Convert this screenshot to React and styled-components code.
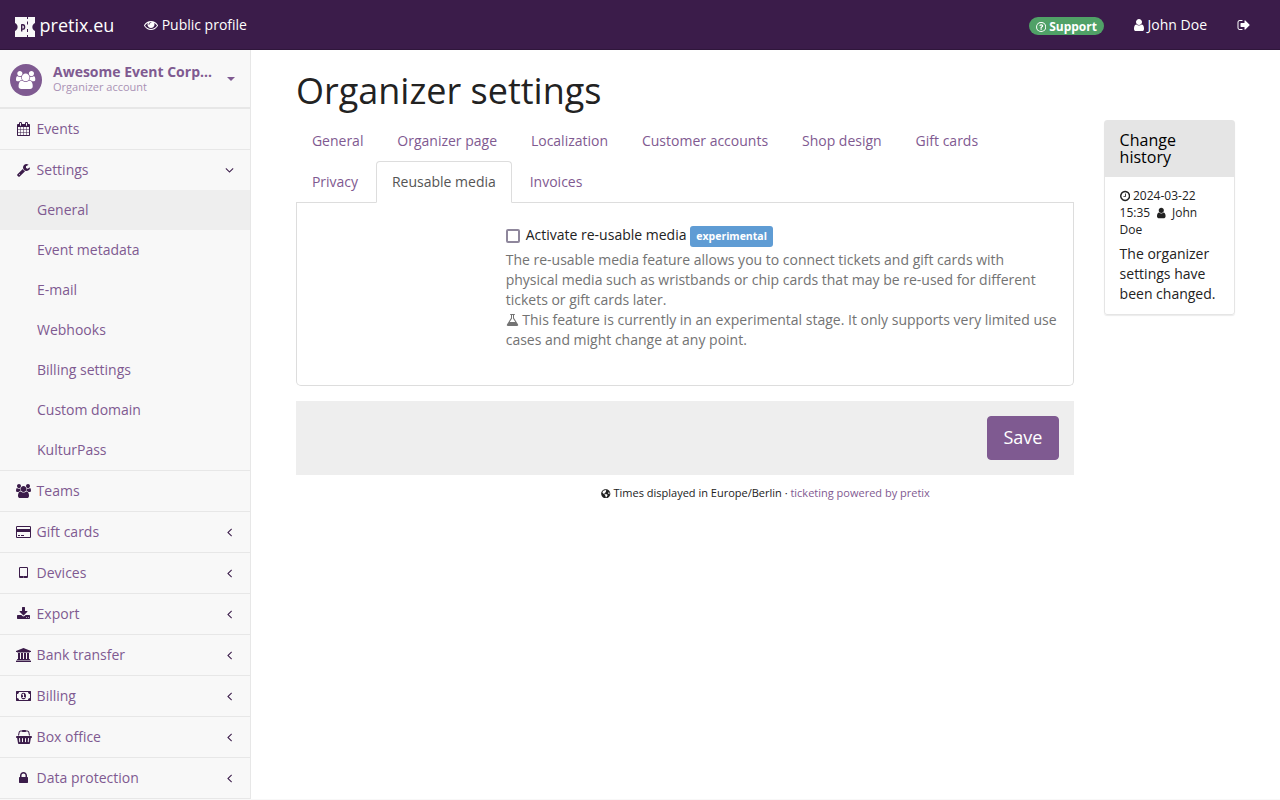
import React from 'react';
import styled, { createGlobalStyle, css } from 'styled-components';
import { FaGlobeAmericas } from 'react-icons/fa';

const Global = createGlobalStyle`
  *, *::before, *::after { box-sizing: border-box; }
  html, body { margin: 0; }
  body {
    height: 800px;
    overflow: hidden;
    background: #f8f8f8;
    color: #222;
    font: 14px/20px "Open Sans", "Noto Sans", sans-serif;
  }
  a { color: #7f5a91; text-decoration: none; }
`;

const paths = {
  eye: [1792, 'M1664 960q-152-236-381-353 61 104 61 225 0 185-131.500 316.500t-316.500 131.500-316.500-131.500-131.500-316.500q0-121 61-225-229 117-381 353 133 205 333.500 326.500t434.500 121.500 434.500-121.500 333.500-326.500zm-720-384q0-20-14-34t-34-14q-125 0-214.500 89.500t-89.500 214.500q0 20 14 34t34 14 34-14 14-34q0-86 61-147t147-61q20 0 34-14t14-34zm848 384q0 34-20 69-140 230-376.500 368.500t-499.500 138.500-499.500-139-376.500-368q-20-35-20-69t20-69q140-229 376.500-368t499.500-139 499.500 139 376.500 368q20 35 20 69z'],
  user: [1280, 'M1536 1399q0 109-62.500 187t-150.500 78h-854q-88 0-150.500-78t-62.500-187q0-85 8.500-160.500t31.500-152 58.500-131 94-89 134.500-34.500q131 128 313 128t313-128q76 0 134.500 34.500t94 89 58.500 131 31.500 152 8.500 160.500zm-256-887q0 159-112.500 271.500t-271.500 112.500-271.500-112.500-112.500-271.500 112.500-271.500 271.500-112.500 271.500 112.500 112.500 271.500z', 256],
  signOut: [1664, 'M704 1440q0 4 1 20t.5 26.500-3 23.500-10 19.500-20.500 6.500h-320q-119 0-203.500-84.500t-84.500-203.500v-704q0-119 84.500-203.500t203.500-84.500h320q13 0 22.500 9.500t9.500 22.500q0 4 1 20t.5 26.500-3 23.500-10 19.500-20.500 6.500h-320q-66 0-113 47t-47 113v704q0 66 47 113t113 47h312l11.500 1 11.500 3 8 5.500 7 9 2 13.500zm928-544q0 26-19 45l-544 544q-19 19-45 19t-45-19-19-45v-288h-448q-26 0-45-19t-19-45v-384q0-26 19-45t45-19h448v-288q0-26 19-45t45-19 45 19l544 544q19 19 19 45z'],
  calendar: [1664, 'M192 1664h288v-288h-288v288zm352 0h320v-288h-320v288zm-352-352h288v-320h-288v320zm352 0h320v-320h-320v320zm-352-384h288v-288h-288v288zm736 736h320v-288h-320v288zm-384-736h320v-288h-320v288zm768 736h288v-288h-288v288zm-384-352h320v-320h-320v320zm-352-864v-288q0-13-9.500-22.500t-22.500-9.500h-64q-13 0-22.500 9.500t-9.500 22.500v288q0 13 9.500 22.500t22.500 9.500h64q13 0 22.500-9.500t9.500-22.500zm736 864h288v-320h-288v320zm-384-384h320v-288h-320v288zm384 0h288v-288h-288v288zm32-480v-288q0-13-9.500-22.500t-22.500-9.500h-64q-13 0-22.500 9.500t-9.500 22.500v288q0 13 9.500 22.500t22.500 9.500h64q13 0 22.500-9.500t9.500-22.500zm384-64v1280q0 52-38 90t-90 38h-1408q-52 0-90-38t-38-90v-1280q0-52 38-90t90-38h128v-96q0-66 47-113t113-47h64q66 0 113 47t47 113v96h384v-96q0-66 47-113t113-47h64q66 0 113 47t47 113v96h128q52 0 90 38t38 90z', 64],
  wrench: [1664, 'M448 1472q0-26-19-45t-45-19-45 19-19 45 19 45 45 19 45-19 19-45zm644-420l-682 682q-37 37-90 37-52 0-91-37l-106-108q-38-36-38-90 0-53 38-91l681-681q39 98 114.500 173.500t173.500 114.500zm634-435q0 39-23 106-47 134-164.500 217.500t-258.500 83.500q-185 0-316.500-131.500t-131.500-316.500 131.500-316.500 316.500-131.500q58 0 121.500 16.500t107.500 46.500q16 11 16 28t-16 28l-293 169v224l193 107q5-3 79-48.500t135.500-81 70.500-35.500q15 0 23.500 10t8.500 25z', 64],
  group: [1920, 'M593 896q-162 5-265 128h-134q-82 0-138-40.500t-56-118.500q0-353 124-353 6 0 43.500 21t97.500 42.500 119 21.500q67 0 133-23-5 37-5 66 0 139 81 256zm1071 637q0 120-73 189.500t-194 69.500h-874q-121 0-194-69.500t-73-189.500q0-53 3.500-103.500t14-109 26.500-108.500 43-97.500 62-81 85.500-53.500 111.500-20q10 0 43 21.500t73 48 107 48 135 21.500 135-21.500 107-48 73-48 43-21.500q61 0 111.500 20t85.500 53.500 62 81 43 97.500 26.500 108.500 14 109 3.500 103.500zm-1024-1277q0 106-75 181t-181 75-181-75-75-181 75-181 181-75 181 75 75 181zm704 384q0 159-112.500 271.500t-271.500 112.500-271.500-112.500-112.500-271.500 112.500-271.500 271.500-112.500 271.500 112.500 112.500 271.500zm576 225q0 78-56 118.500t-138 40.500h-134q-103-123-265-128 81-117 81-256 0-29-5-66 66 23 133 23 59 0 119-21.500t97.500-42.500 43.500-21q124 0 124 353zm-128-609q0 106-75 181t-181 75-181-75-75-181 75-181 181-75 181 75 75 181z'],
  card: [1920, 'M1760 128q66 0 113 47t47 113v1216q0 66-47 113t-113 47h-1600q-66 0-113-47t-47-113v-1216q0-66 47-113t113-47h1600zm-1600 128q-13 0-22.500 9.500t-9.500 22.500v224h1664v-224q0-13-9.500-22.500t-22.500-9.500h-1600zm1600 1280q13 0 22.500-9.500t9.500-22.500v-608h-1664v608q0 13 9.500 22.500t22.500 9.500h1600zm-1504-128v-128h256v128h-256zm384 0v-128h384v128h-384z'],
  tablet: [1152, 'M960 1408q0-26-19-45t-45-19-45 19-19 45 19 45 45 19 45-19 19-45zm384-160v-960q0-13-9.500-22.500t-22.500-9.500h-832q-13 0-22.500 9.500t-9.500 22.500v960q0 13 9.500 22.500t22.500 9.500h832q13 0 22.500-9.500t9.500-22.500zm128-960v1088q0 66-47 113t-113 47h-832q-66 0-113-47t-47-113v-1088q0-66 47-113t113-47h832q66 0 113 47t47 113z', 320],
  download: [1664, 'M1344 1344q0-26-19-45t-45-19-45 19-19 45 19 45 45 19 45-19 19-45zm256 0q0-26-19-45t-45-19-45 19-19 45 19 45 45 19 45-19 19-45zm128-224v320q0 40-28 68t-68 28h-1472q-40 0-68-28t-28-68v-320q0-40 28-68t68-28h465l135 136q58 56 136 56t136-56l136-136h464q40 0 68 28t28 68zm-325-569q17 41-14 70l-448 448q-18 19-45 19t-45-19l-448-448q-31-29-14-70 17-39 59-39h256v-448q0-26 19-45t45-19h256q26 0 45 19t19 45v448h256q42 0 59 39z', 64],
  bank: [1920, 'M960 0l960 384v128h-128q0 26-20.500 45t-48.500 19h-1526q-28 0-48.500-19t-20.500-45h-128v-128zm-704 640h256v768h128v-768h256v768h128v-768h256v768h128v-768h256v768h59q28 0 48.500 19t20.500 45v64h-1664v-64q0-26 20.500-45t48.500-19h59v-768zm1595 960q28 0 48.500 19t20.500 45v128h-1920v-128q0-26 20.500-45t48.500-19h1782z'],
  money: [1920, 'M768 1152h384v-96h-128v-448h-114l-148 137 77 80q42-37 55-57h2v288h-128v96zm512-256q0 70-21 142t-59.500 134-101.500 101-138 39-138-39-101.500-101-59.500-134-21-142 21-142 59.500-134 101.500-101 138-39 138 39 101.500 101 59.500 134 21 142zm512 256v-512q-106 0-181-75t-75-181h-1152q0 106-75 181t-181 75v512q106 0 181 75t75 181h1152q0-106 75-181t181-75zm128-832v1152q0 26-19 45t-45 19h-1792q-26 0-45-19t-19-45v-1152q0-26 19-45t45-19h1792q26 0 45 19t19 45z'],
  basket: [2048, 'M1920 768q53 0 90.500 37.500t37.500 90.500-37.500 90.500-90.500 37.500h-15l-115 662q-8 46-44 76t-82 30h-1280q-46 0-82-30t-44-76l-115-662h-15q-53 0-90.500-37.500t-37.500-90.500 37.500-90.500 90.500-37.500h1792zm-1435 800q26-2 43.500-22.500t15.500-46.500l-32-416q-2-26-22.500-43.500t-46.500-15.500-43.500 22.500-15.500 46.500l32 416q2 25 20.500 42t43.500 17h5zm411-64v-416q0-26-19-45t-45-19-45 19-19 45v416q0 26 19 45t45 19 45-19 19-45zm384 0v-416q0-26-19-45t-45-19-45 19-19 45v416q0 26 19 45t45 19 45-19 19-45zm352 5l32-416q2-26-15.500-46.500t-43.500-22.500-46.500 15.500-22.500 43.500l-32 416q-2 26 15.500 46.500t43.500 22.500h5q25 0 43.500-17t20.500-42zm-1156-1217l-93 412h-132l101-441q19-88 89-143.500t160-55.500h167q0-26 19-45t45-19h384q26 0 45 19t19 45h167q90 0 160 55.500t89 143.500l101 441h-132l-93-412q-11-44-45.500-72t-79.500-28h-167q0 26-19 45t-45 19h-384q-26 0-45-19t-19-45h-167q-45 0-79.500 28t-45.500 72z'],
  lock: [1152, 'M640 768h512v-192q0-106-75-181t-181-75-181 75-75 181v192zm832 96v576q0 40-28 68t-68 28h-960q-40 0-68-28t-28-68v-576q0-40 28-68t68-28h32v-192q0-184 132-316t316-132 316 132 132 316v192h32q40 0 68 28t28 68z', 320],
  left: [640, 'M1203 544q0 13-10 23l-393 393 393 393q10 10 10 23t-10 23l-50 50q-10 10-23 10t-23-10l-466-466q-10-10-10-23t10-23l466-466q10-10 23-10t23 10l50 50q10 10 10 23z', 576],
  down: [1152, 'M1395 736q0 13-10 23l-466 466q-10 10-23 10t-23-10l-466-466q-10-10-10-23t10-23l50-50q10-10 23-10t23 10l393 393 393-393q10-10 23-10t23 10l50 50q10 10 10 23z', 320],
  clock: [1536, 'M1024 544v448q0 14-9 23t-23 9h-320q-14 0-23-9t-9-23v-64q0-14 9-23t23-9h224v-352q0-14 9-23t23-9h64q14 0 23 9t9 23zm416 352q0-148-73-273t-198-198-273-73-273 73-198 198-73 273 73 273 198 198 273 73 273-73 198-198 73-273zm224 0q0 209-103 385.500t-279.500 279.500-385.500 103-385.500-103-279.500-279.500-103-385.500 103-385.500 279.500-279.500 385.500-103 385.500 103 279.500 279.500 103 385.500z', 128],
  flask: [1664, 'M1591 1448q56 89 21.500 152.500t-140.500 63.500h-1152q-106 0-140.500-63.500t21.500-152.500l503-793v-399h-64q-26 0-45-19t-19-45 19-45 45-19h512q26 0 45 19t19 45-19 45-45 19h-64v399zm-779-725l-272 429h712l-272-429-20-31v-436h-128v436z', 64],
};

const Glyph = styled.svg`
  height: 1em;
  width: ${(p) => p.$w}em;
  fill: currentColor;
  vertical-align: -0.143em;
  flex: none;
`;

function Icon({ name, ...rest }) {
  const [w, d, x = 0] = paths[name];
  return (
    <Glyph $w={w / 1792} viewBox={`${x} 0 ${w} 1792`} {...rest}>
      <path d={d} />
    </Glyph>
  );
}

function HelpIcon() {
  return (
    <Glyph $w={1536 / 1792} viewBox="128 0 1536 1792">
      <circle cx="896" cy="896" r="688" fill="none" stroke="currentColor" strokeWidth="150" />
      <g transform="translate(188 180) scale(.79)">
        <path d="M1024 1376v-192q0-14-9-23t-23-9h-192q-14 0-23 9t-9 23v192q0 14 9 23t23 9h192q14 0 23-9t9-23zm256-672q0-88-55.500-163t-138.500-116-170-41q-243 0-371 213-15 24 8 42l132 100q7 6 19 6 16 0 25-12 53-68 86-92 34-24 86-24 48 0 85.500 26t37.500 59q0 38-20 61t-68 45q-63 28-115.500 86.500t-52.500 125.500v36q0 14 9 23t23 9h192q14 0 23-9t9-23q0-19 21.500-49.500t54.500-49.500q32-18 49-28.500t46-35 44.500-48 28-60.500 12.500-81z" />
      </g>
    </Glyph>
  );
}

const TopBar = styled.header`
  height: 50px;
  display: flex;
  align-items: flex-start;
  padding: 15px 30px 0 15px;
  background: #3b1c4a;
  border-bottom: 1px solid #2f163b;
  color: #fff;
`;
const Brand = styled.a`
  display: flex;
  gap: 4.6px;
  width: 129px;
  color: #fff;
  font-size: 18px;
`;
const Logo = styled.svg`
  width: 20px;
  height: 20px;
  margin-top: 2px;
`;
const TopLink = styled.a`
  color: #fff;
  margin-left: ${(p) => p.$gap || 0}px;
`;
const Spacer = styled.div`
  flex: 1;
`;
const SupportPill = styled.a`
  display: flex;
  align-items: center;
  gap: 3px;
  height: 18px;
  margin-top: 2px;
  padding: 1px 7px 0;
  border-radius: 9px;
  background: #50a167;
  color: #fff;
  font-size: 12px;
  font-weight: 700;
`;

const Layout = styled.div`
  display: flex;
  height: 749px;
`;
const Sidebar = styled.nav`
  width: 251px;
  flex: none;
  background: #f8f8f8;
  border-right: 1px solid #e7e7e7;
`;
const Account = styled.div`
  display: flex;
  align-items: center;
  height: 59px;
  padding: 1px 15px 0 10px;
  border-bottom: 2px solid #e7e7e7;
  color: #7f5a91;
`;
const Avatar = styled.div`
  display: flex;
  align-items: center;
  justify-content: center;
  width: 32px;
  height: 32px;
  margin-top: 2px;
  border-radius: 50%;
  background: #7f5a91;
  color: #fff;
  font-size: 18px;
`;
const AccountText = styled.div`
  width: 163px;
  margin: 0 11px;
  line-height: 15px;
`;
const AccountName = styled.div`
  font-weight: 700;
  white-space: nowrap;
`;
const AccountKind = styled.div`
  font-size: 11px;
  opacity: 0.65;
`;
const Caret = styled.span`
  border: 4px solid transparent;
  border-top-color: #7f5a91;
  border-bottom: 0;
`;
const NavItem = styled.a`
  display: flex;
  align-items: center;
  height: ${(p) => (p.$open ? 40 : 41)}px;
  padding: 0 16px 0 14.6px;
  border-bottom: ${(p) => (p.$open ? 0 : 1)}px solid #e7e7e7;
`;
const NavIcon = styled.span`
  width: 18px;
  margin-right: 4px;
  display: flex;
  justify-content: center;
  color: #3b1c4a;
`;
const NavArrow = styled.span`
  display: flex;
  justify-content: center;
  width: 9px;
  margin-left: auto;
  color: #3b1c4a;
`;
const SubNav = styled.div`
  border-bottom: 1px solid #e7e7e7;
`;
const SubItem = styled.a`
  display: block;
  height: 40px;
  padding: 10px 15px 10px 37px;
  ${(p) => p.$active && css`background: #eee;`}
`;

const Main = styled.main`
  flex: 1;
  padding: 20px 45px 0;
  background: #fff;
`;
const Title = styled.h1`
  margin: 0 0 9px;
  font-size: 36px;
  line-height: 41px;
  font-weight: 400;
`;
const Columns = styled.div`
  display: grid;
  grid-template-columns: 778px 131px;
  gap: 30px;
  align-items: start;
`;
const Tabs = styled.div`
  display: flex;
  flex-wrap: wrap;
  padding-right: 60px;
  border-bottom: 1px solid #ddd;
`;
const Tab = styled.a`
  height: 42px;
  margin: 0 2px -1px 0;
  padding: 10px 15px 10px 14.9px;
  border: 1px solid transparent;
  border-radius: 4px 4px 0 0;
  ${(p) => p.$active && css`
    color: #555;
    background: #fff;
    border-color: #ddd #ddd #fff;
  `}
`;
const TabPanel = styled.section`
  height: 183px;
  padding: 21px 15px 0 208.7px;
  border: 1px solid #ddd;
  border-top: 0;
  border-radius: 0 0 5px 5px;
`;
const CheckRow = styled.label`
  display: flex;
  align-items: center;
  height: 21px;
  margin-bottom: 5px;
`;
const CheckBox = styled.input`
  appearance: none;
  width: 14px;
  height: 14px;
  margin: 2px 6px 0 0;
  border: 2px solid #8f879c;
  border-radius: 2px;
  background: #fff;
`;
const Badge = styled.span`
  height: 21px;
  margin: 3px 0 0 3.5px;
  padding: 0 6.3px;
  border-radius: 3px;
  background: #5f9cd4;
  color: #fff;
  font-size: 10.5px;
  font-weight: 700;
`;
const Help = styled.div`
  color: #737373;
`;
const Actions = styled.div`
  display: flex;
  justify-content: flex-end;
  margin-top: 15px;
  padding: 15px;
  background: #eee;
`;
const SaveButton = styled.button`
  width: 72px;
  height: 44px;
  padding: 0 0 2px;
  border: 1px solid #7f5a91;
  border-radius: 4px;
  background: #7f5a91;
  color: #fff;
  font: 18px/24px "Open Sans", sans-serif;
`;
const Footer = styled.footer`
  margin-top: 8px;
  text-align: center;
  font-size: 11px;
  width: 939px;
  svg { vertical-align: -1px; }
`;
const History = styled.aside`
  border: 1px solid #e5e5e5;
  border-radius: 3px;
  box-shadow: 0 1px 1px rgba(0, 0, 0, 0.08);
`;
const HistoryHead = styled.h3`
  margin: 0;
  padding: 11px 15px 11px 14.6px;
  background: #e5e5e5;
  color: #000;
  font-size: 16px;
  line-height: 17px;
  font-weight: 400;
`;
const HistoryBody = styled.div`
  padding: 10px 14px 10px 14.6px;
`;
const Meta = styled.p`
  display: flex;
  flex-direction: column;
  margin: 0 0 6px;
  font-size: 12px;
  line-height: 17px;
`;
const MetaUser = styled.span`
  margin-left: 4px;
  svg { margin-right: 3px; }
`;
const Entry = styled.div`
  white-space: nowrap;
`;

const menu = [
  ['Teams', 'group', false],
  ['Gift cards', 'card', true],
  ['Devices', 'tablet', true],
  ['Export', 'download', true],
  ['Bank transfer', 'bank', true],
  ['Billing', 'money', true],
  ['Box office', 'basket', true],
  ['Data protection', 'lock', true],
];
const settings = ['General', 'Event metadata', 'E-mail', 'Webhooks', 'Billing settings', 'Custom domain', 'KulturPass'];
const tabs = ['General', 'Organizer page', 'Localization', 'Customer accounts', 'Shop design', 'Gift cards', 'Privacy', 'Reusable media', 'Invoices'];

function MenuEntry({ label, icon, arrow, open }) {
  return (
    <NavItem href="#" $open={open}>
      <NavIcon><Icon name={icon} /></NavIcon>
      {label}
      {arrow && <NavArrow><Icon name={arrow} /></NavArrow>}
    </NavItem>
  );
}

export default function App() {
  return (
    <>
      <Global />
      <TopBar>
        <Brand href="#">
          <Logo viewBox="0 0 20 20">
            <path fill="#f8f8f8" d="M0 0H20V6C16.500 7.500 16.500 12.500 20 14V20H0V14C3.500 12.500 3.500 7.500 0 6z" />
            <path fill="none" stroke="#3b1c4a" strokeWidth="1" d="M12.500 0v2M12.500 4.500v3M12.500 12v3M12.500 18v2" />
            <path fill="none" stroke="#3b1c4a" strokeWidth="1.400" d="M6.700 14.500V7.200M6.700 7.700h1.200q1.700 0 1.700 2.200t-1.700 2.200H6.700" />
          </Logo>
          pretix.eu
        </Brand>
        <TopLink href="#"><Icon name="eye" /> Public profile</TopLink>
        <Spacer />
        <SupportPill href="#"><HelpIcon />Support</SupportPill>
        <TopLink href="#" $gap={30}><Icon name="user" /> John Doe</TopLink>
        <TopLink href="#" $gap={30}><Icon name="signOut" /></TopLink>
      </TopBar>
      <Layout>
        <Sidebar>
          <Account>
            <Avatar><Icon name="group" /></Avatar>
            <AccountText>
              <AccountName>Awesome Event Corp…</AccountName>
              <AccountKind>Organizer account</AccountKind>
            </AccountText>
            <Caret />
          </Account>
          <MenuEntry label="Events" icon="calendar" />
          <MenuEntry label="Settings" icon="wrench" arrow="down" open />
          <SubNav>
            {settings.map((s, i) => <SubItem href="#" key={s} $active={i === 0}>{s}</SubItem>)}
          </SubNav>
          {menu.map(([label, icon, arrow]) => (
            <MenuEntry key={label} label={label} icon={icon} arrow={arrow && 'left'} />
          ))}
        </Sidebar>
        <Main>
          <Title>Organizer settings</Title>
          <Columns>
            <div>
              <Tabs>
                {tabs.map((t) => <Tab href="#" key={t} $active={t === 'Reusable media'}>{t}</Tab>)}
              </Tabs>
              <TabPanel>
                <CheckRow>
                  <CheckBox type="checkbox" />
                  Activate re-usable media
                  <Badge>experimental</Badge>
                </CheckRow>
                <Help>
                  The re-usable media feature allows you to connect tickets and gift cards with physical media such as
                  wristbands or chip cards that may be re-used for different tickets or gift cards later.
                  <br />
                  <Icon name="flask" /> This feature is currently in an experimental stage. It only supports very
                  limited use cases and might change at any point.
                </Help>
              </TabPanel>
              <Actions><SaveButton>Save</SaveButton></Actions>
            </div>
            <History>
              <HistoryHead>Change history</HistoryHead>
              <HistoryBody>
                <Meta>
                  <span><Icon name="clock" /> 2024-03-22</span>
                  <span>15:35 <MetaUser><Icon name="user" /> John</MetaUser></span>
                  <span>Doe</span>
                </Meta>
                <Entry>The organizer<br />settings have<br />been changed.</Entry>
              </HistoryBody>
            </History>
          </Columns>
          <Footer>
            <FaGlobeAmericas size={9.5} /> Times displayed in Europe/Berlin · <a href="#">ticketing powered by pretix</a>
          </Footer>
        </Main>
      </Layout>
    </>
  );
}
